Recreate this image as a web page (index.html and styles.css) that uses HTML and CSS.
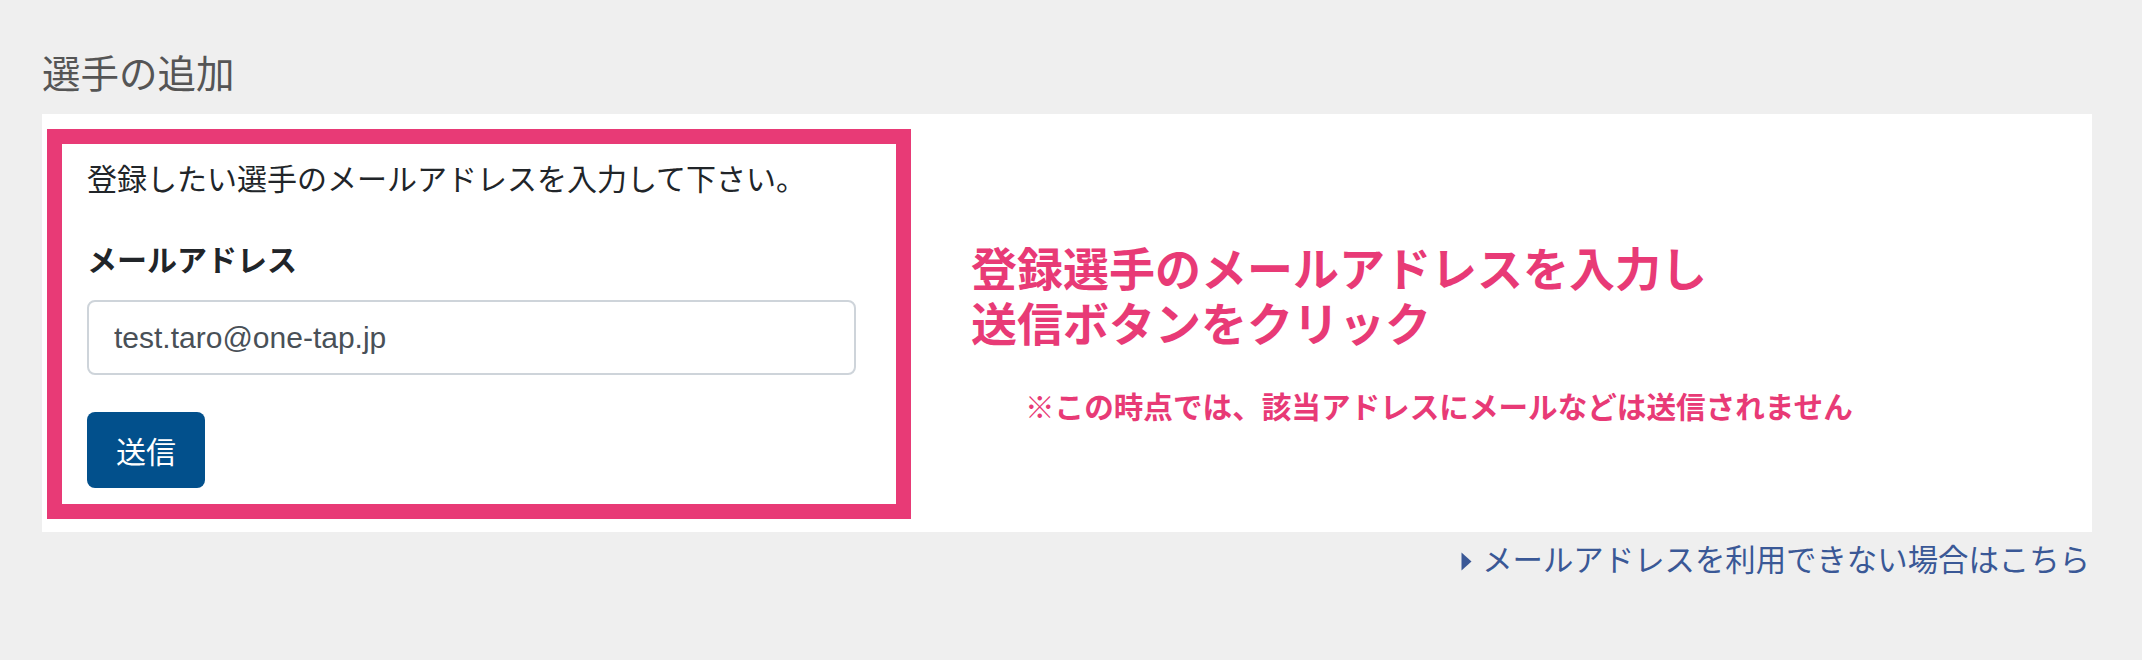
FILE: index.html
```html
<!DOCTYPE html>
<html lang="ja">
<head>
<meta charset="utf-8">
<title>選手の追加</title>
<link rel="stylesheet" href="styles.css">
</head>
<body>
<div class="page">
  <h1 class="title">選手の追加</h1>
  <div class="panel">
    <div class="form-box">
      <p class="lead">登録したい選手のメールアドレスを入力して下さい。</p>
      <label class="label" for="email">メールアドレス</label>
      <input class="input" id="email" type="text" value="test.taro@one-tap.jp">
      <button class="btn" type="button">送信</button>
    </div>
    <div class="note-col">
      <p class="big">登録選手のメールアドレスを入力し<br>送信ボタンをクリック</p>
      <p class="small">※この時点では、該当アドレスにメールなどは送信されません</p>
    </div>
  </div>
  <div class="link-row">
    <a class="link" href="#"><svg class="caret" width="11" height="19" viewBox="0 0 11 19"><path d="M0.5 0.5 L10.5 9.5 L0.5 18.5 Z" fill="#3a5896"/></svg>メールアドレスを利用できない場合はこちら</a>
  </div>
</div>
</body>
</html>
```

FILE: styles.css
```css
html, body {
  margin: 0;
  padding: 0;
  background: #efefef;
}
body {
  font-family: "Liberation Sans", "Noto Sans CJK JP", sans-serif;
  color: #212529;
}
.page {
  padding: 0 50px 0 42px;
}
.title {
  margin: 0;
  padding-top: 48px;
  font-size: 38.5px;
  line-height: 54px;
  font-weight: normal;
  color: #555;
  height: 66px;
}
.panel {
  background: #fff;
  display: flex;
  padding: 15px 0 13px 5px;
}
.form-box {
  box-sizing: border-box;
  width: 864px;
  flex: none;
  border: 15px solid #e83a76;
  padding: 13px 0 16px 25px;
  display: flex;
  flex-direction: column;
  align-items: flex-start;
}
.lead {
  margin: 0;
  font-size: 30px;
  line-height: 45px;
}
.label {
  margin-top: 36px;
  font-size: 30px;
  line-height: 45px;
  font-weight: bold;
}
.input {
  box-sizing: border-box;
  margin-top: 17px;
  width: 769px;
  height: 75px;
  border: 2px solid #ced4da;
  border-radius: 8px;
  padding: 0 25px;
  font-family: "Liberation Sans", sans-serif;
  font-size: 30px;
  color: #495057;
  background: #fff;
  outline: none;
}
.btn {
  margin-top: 37px;
  width: 118px;
  height: 76px;
  border: 0;
  border-radius: 8px;
  background: #02508c;
  color: #fff;
  font-family: "Liberation Sans", "Noto Sans CJK JP", sans-serif;
  font-size: 30px;
  padding: 0;
}
.note-col {
  padding: 114px 0 0 60px;
}
.big {
  margin: 0;
  font-size: 46px;
  line-height: 55px;
  font-weight: bold;
  color: #e83a76;
}
.small {
  margin: 32px 0 0 54px;
  font-size: 29.6px;
  line-height: 45px;
  font-weight: bold;
  color: #e83a76;
}
.link-row {
  display: flex;
  justify-content: flex-end;
  margin-top: 6px;
  padding-right: 2px;
}
.link {
  display: flex;
  align-items: center;
  gap: 10px;
  font-size: 30.4px;
  line-height: 45px;
  color: #3a5896;
  text-decoration: none;
}
.caret {
  display: block;
  flex: none;
  width: 11px;
  height: 19px;
  margin-top: 2px;
}
```
